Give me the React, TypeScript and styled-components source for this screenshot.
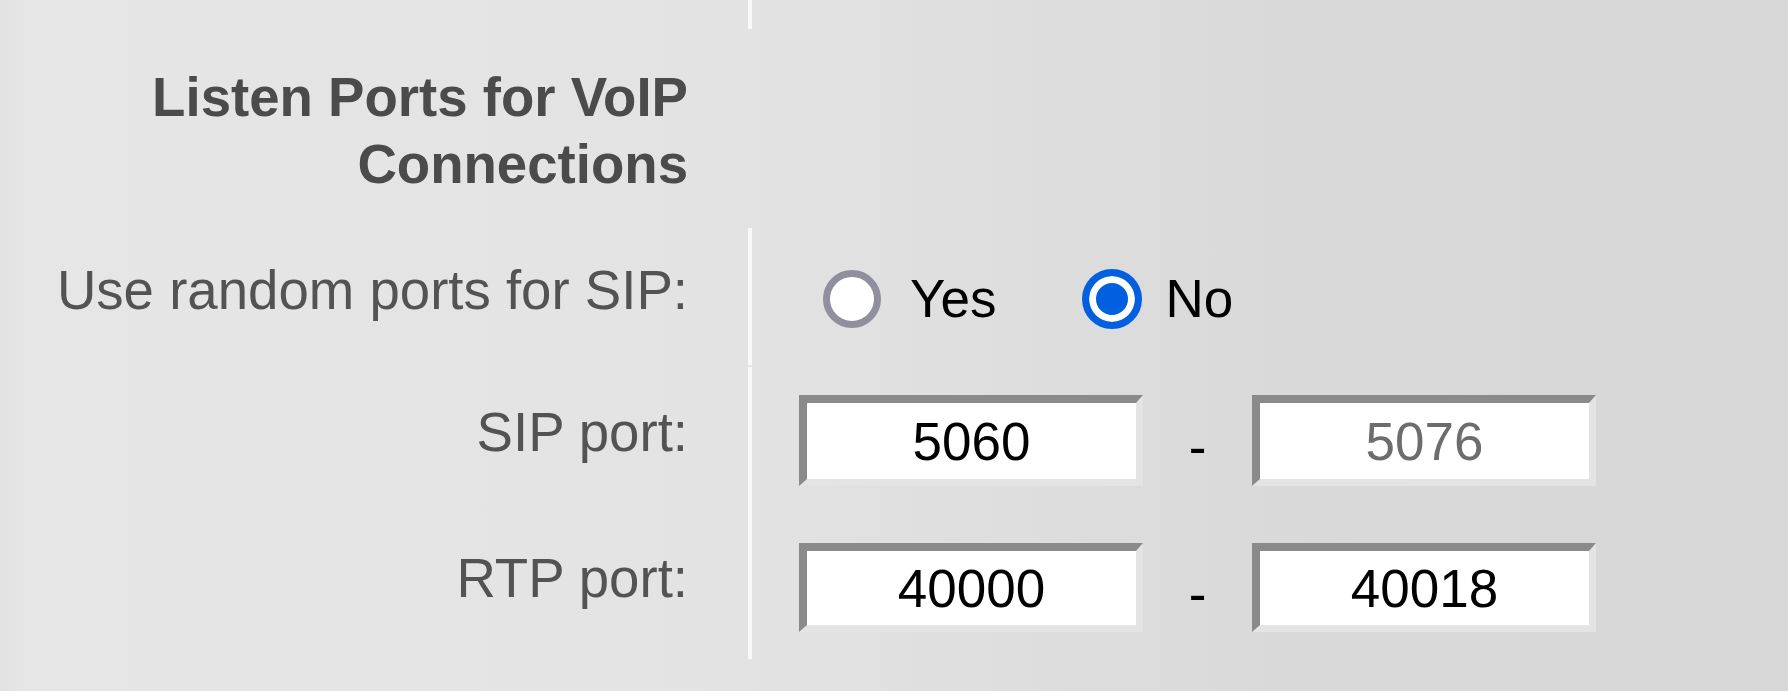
import React from 'react';
import styled, { createGlobalStyle } from 'styled-components';

const GlobalStyle = createGlobalStyle`
  html, body {
    margin: 0;
    padding: 0;
  }
  body {
    width: 1788px;
    height: 691px;
    overflow: hidden;
    background: linear-gradient(
      90deg,
      #e1e1e1 0,
      #e6e6e6 24px,
      #e3e3e3 740px,
      #dcdcdc 1100px,
      #d9d9d9 1300px,
      #d7d7d7 100%
    );
    font-family: 'Liberation Sans', Arial, sans-serif;
  }
`;

const Table = styled.div`
  display: flex;
  flex-direction: column;
  width: 1788px;
`;

const Row = styled.div<{ $gap?: number }>`
  display: grid;
  grid-template-columns: 748px 1fr;
  margin-top: ${({ $gap }) => $gap || 0}px;
`;

const LabelCell = styled.div<{ $top: number; $bottom?: number; $bold?: boolean }>`
  padding: ${({ $top }) => $top}px 60px ${({ $bottom }) => $bottom || 0}px 0;
  text-align: right;
  font-size: 54.6px;
  line-height: 66px;
  font-weight: ${({ $bold }) => ($bold ? 700 : 400)};
  color: ${({ $bold }) => ($bold ? '#4b4b4b' : '#535353')};
`;

const Heading = styled.div`
  line-height: 67px;
`;

const ValueCell = styled.div<{ $top?: number; $bottom?: number; $divider?: boolean; $height?: number }>`
  display: flex;
  align-items: flex-start;
  padding: ${({ $top }) => $top || 0}px 0 ${({ $bottom }) => $bottom || 0}px 47px;
  border-left: 4px solid ${({ $divider }) => ($divider ? '#f9f9f9' : 'transparent')};
  ${({ $height }) => ($height ? `height: ${$height}px; box-sizing: border-box;` : '')}
`;

const RadioGroup = styled.div`
  display: flex;
  align-items: center;
  margin-left: 24px;
`;

const RadioOption = styled.label<{ $space?: number }>`
  display: flex;
  align-items: center;
  margin-right: ${({ $space }) => $space || 0}px;
  font-size: 53px;
  color: #000;
`;

const Radio = styled.input<{ $gap: number }>`
  appearance: none;
  margin: 0 ${({ $gap }) => $gap}px 0 0;
  width: 58px;
  height: 58px;
  box-sizing: border-box;
  border-radius: 50%;
  border: 7px solid #8f8f9d;
  background: #fff;

  &:checked {
    width: 60px;
    height: 60px;
    border: 7px solid #0060df;
    background: #0060df;
    box-shadow: inset 0 0 0 7px #fff;
  }
`;

const PortRange = styled.div`
  display: flex;
  align-items: center;
`;

const PortInput = styled.input<{ $muted?: boolean; $height: number }>`
  width: 344px;
  height: ${({ $height }) => $height}px;
  box-sizing: border-box;
  margin: 0;
  padding: 0;
  border-style: solid;
  border-width: 8px 7px 7px 8px;
  border-color: #8a8a8a #e4e4e4 #e4e4e4 #8a8a8a;
  background: #fff;
  text-align: center;
  font-family: 'Liberation Sans', Arial, sans-serif;
  font-size: 53px;
  color: ${({ $muted }) => ($muted ? '#6d6d6d' : '#000')};
  outline: none;
`;

const Dash = styled.span`
  width: 109px;
  padding-top: 12px;
  text-align: center;
  font-size: 53px;
  color: #000;
`;

const ports = [
  { label: 'SIP port:', from: '5060', to: '5076', toMuted: true, gap: 2, top: 28, labelTop: 33, height: 91, bottom: 28 },
  { label: 'RTP port:', from: '40000', to: '40018', toMuted: false, gap: 0, top: 29, labelTop: 32, height: 89, bottom: 27 },
];

export default function App() {
  return (
    <>
      <GlobalStyle />
      <Table>
        <Row>
          <LabelCell $top={0} />
          <ValueCell $divider $height={29} />
        </Row>
        <Row>
          <LabelCell $top={35} $bottom={30} $bold>
            <Heading>
              Listen Ports for VoIP
              <br />
              Connections
            </Heading>
          </LabelCell>
          <ValueCell />
        </Row>
        <Row>
          <LabelCell $top={30} $bottom={41}>
            Use random ports for SIP:
          </LabelCell>
          <ValueCell $divider $top={40}>
            <RadioGroup>
              <RadioOption $space={86}>
                <Radio type="radio" name="randomSip" $gap={29} readOnly />
                Yes
              </RadioOption>
              <RadioOption>
                <Radio type="radio" name="randomSip" $gap={23} defaultChecked />
                No
              </RadioOption>
            </RadioGroup>
          </ValueCell>
        </Row>
        {ports.map((p) => (
          <Row key={p.label} $gap={p.gap}>
            <LabelCell $top={p.labelTop}>{p.label}</LabelCell>
            <ValueCell $divider $top={p.top} $bottom={p.bottom}>
              <PortRange>
                <PortInput type="text" defaultValue={p.from} $height={p.height} />
                <Dash>-</Dash>
                <PortInput type="text" defaultValue={p.to} $height={p.height} $muted={p.toMuted} />
              </PortRange>
            </ValueCell>
          </Row>
        ))}
      </Table>
    </>
  );
}
